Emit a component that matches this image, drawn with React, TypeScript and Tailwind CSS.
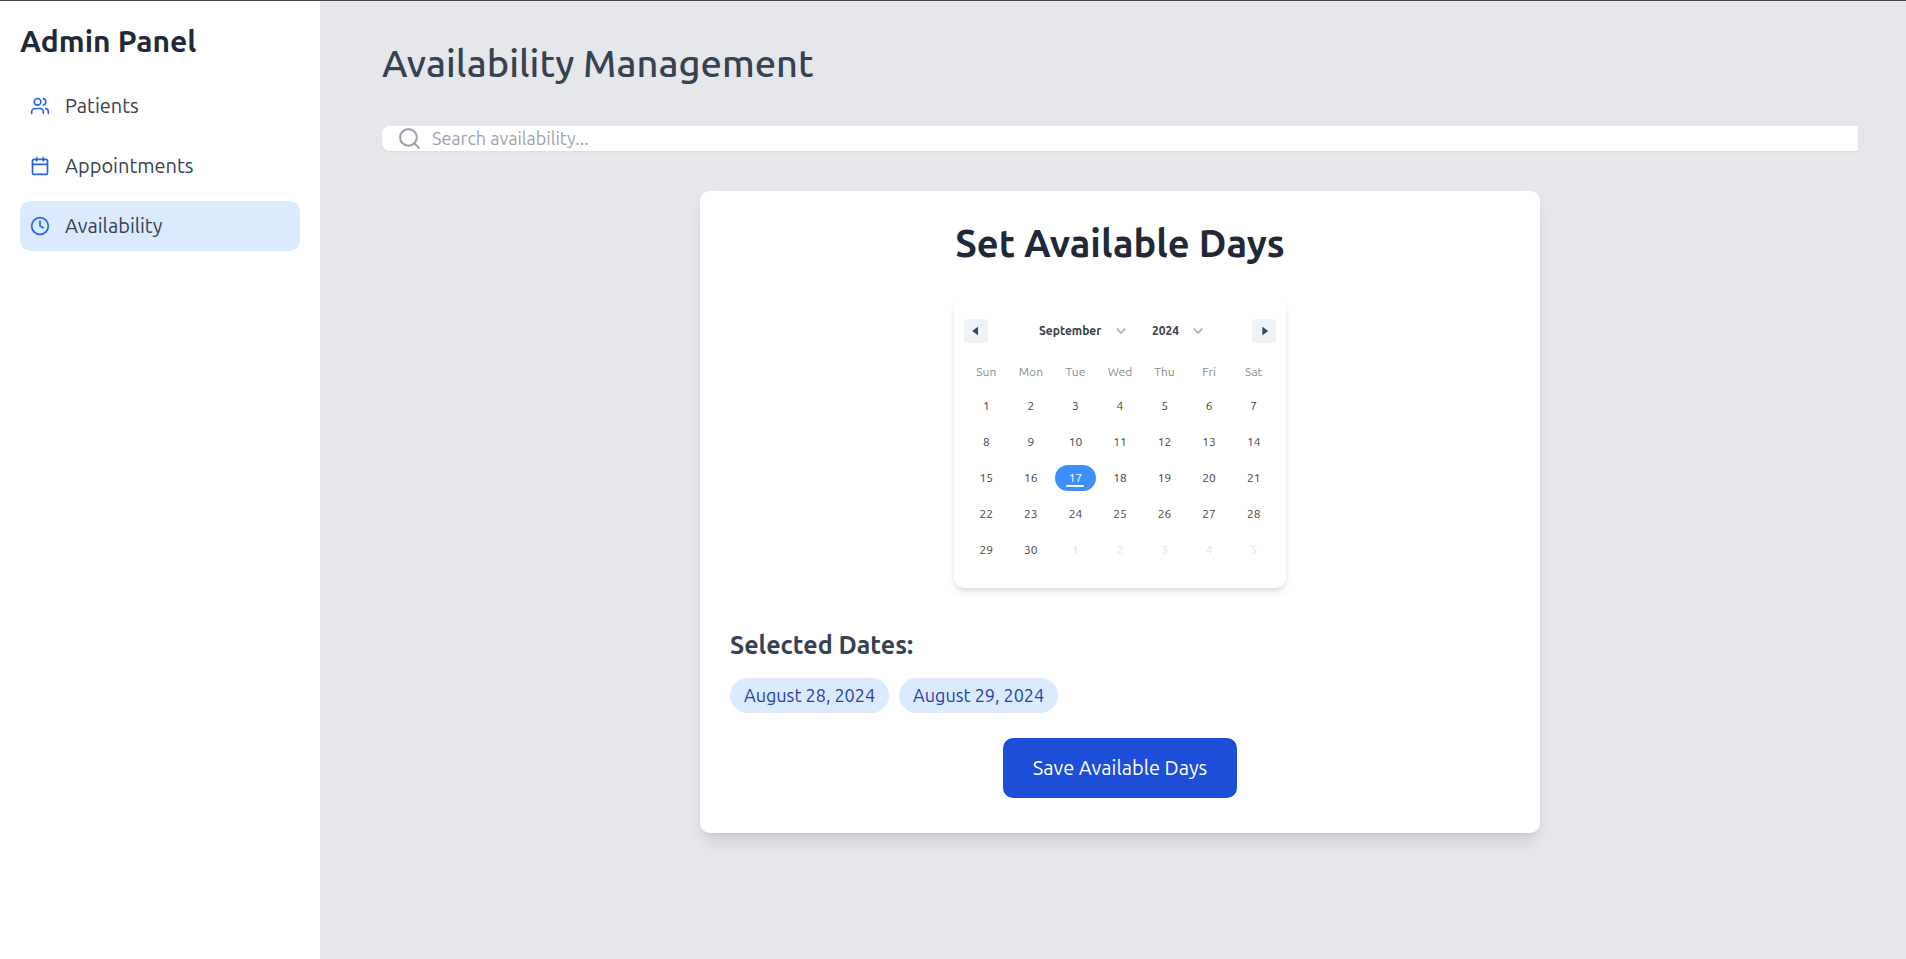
import { useState } from "react";
import { Calendar, Clock, Search, Users, type LucideIcon } from "lucide-react";

const NAV: { label: string; icon: LucideIcon; active?: boolean }[] = [
  { label: "Patients", icon: Users },
  { label: "Appointments", icon: Calendar },
  { label: "Availability", icon: Clock, active: true },
];

const MONTHS = [
  "January", "February", "March", "April", "May", "June",
  "July", "August", "September", "October", "November", "December",
];
const YEARS = [2023, 2024, 2025, 2026];
const WEEKDAYS = ["Sun", "Mon", "Tue", "Wed", "Thu", "Fri", "Sat"];
const SELECTED = ["August 28, 2024", "August 29, 2024"];

type Day = { date: Date; inMonth: boolean };

function buildWeeks(year: number, month: number): Day[][] {
  const offset = new Date(year, month, 1).getDay();
  const total = new Date(year, month + 1, 0).getDate();
  const rows = Math.ceil((offset + total) / 7);
  return Array.from({ length: rows }, (_, r) =>
    Array.from({ length: 7 }, (_, c) => {
      const date = new Date(year, month, r * 7 + c + 1 - offset);
      return { date, inMonth: date.getMonth() === month };
    })
  );
}

function Sidebar() {
  return (
    <aside className="w-80 shrink-0 bg-white p-5">
      <h1 className="mb-5 text-[30px] leading-10 font-bold text-[#1f2937]">Admin Panel</h1>
      <nav>
        <ul className="flex flex-col gap-2.5">
          {NAV.map(({ label, icon: Icon, active }) => (
            <li key={label}>
              <a
                href={`#${label.toLowerCase()}`}
                aria-current={active ? "page" : undefined}
                className={`flex h-[50px] items-center gap-[15px] rounded-[10px] px-2.5 text-xl text-[#374151] ${
                  active ? "bg-[#dbeafe]" : ""
                }`}
              >
                <Icon className="size-5 text-[#2563eb]" strokeWidth={2} />
                {label}
              </a>
            </li>
          ))}
        </ul>
      </nav>
    </aside>
  );
}

function SearchBar() {
  return (
    <div className="mb-10 flex h-[25px] items-center gap-2.5 rounded-l-lg bg-white pl-[15px] shadow-[0_1px_3px_rgba(0,0,0,0.05)]">
      <Search className="size-[25px] shrink-0 text-[#9ca3af]" aria-hidden />
      <input
        type="text"
        aria-label="Search availability"
        placeholder="Search availability..."
        className="h-[25px] min-w-0 flex-1 bg-white text-lg leading-[25px] text-[#374151] outline-none placeholder:text-[#9ca3af]"
      />
    </div>
  );
}

function Chevron() {
  return (
    <svg viewBox="0 0 10 6" className="pointer-events-none absolute top-[9px] right-[7px] h-[6px] w-[10px]" fill="none" stroke="#a6b0b5" strokeWidth="1.7">
      <path d="M0.8 0.6 L5 5 L9.2 0.6" />
    </svg>
  );
}

function NavButton({ label, path, onClick }: { label: string; path: string; onClick: () => void }) {
  return (
    <button type="button" aria-label={label} onClick={onClick} className="flex size-6 items-center justify-center rounded bg-[#eff3f8]">
      <svg viewBox="0 0 12 12" className="size-3" fill="#2f4558">
        <path d={path} />
      </svg>
    </button>
  );
}

function DatePicker() {
  const [view, setView] = useState({ year: 2024, month: 8 });
  const [picked, setPicked] = useState(new Date(2024, 8, 17).getTime());

  const shift = (by: number) => {
    const d = new Date(view.year, view.month + by, 1);
    setView({ year: d.getFullYear(), month: d.getMonth() });
  };

  return (
    <div className="w-[332px] rounded-[10px] bg-white px-2.5 pt-[23px] pb-5 shadow-[0_5px_7px_-1px_rgba(0,0,0,0.1),0_2px_5px_-2px_rgba(0,0,0,0.1)]">
      <div className="flex items-center justify-between">
        <NavButton label="Previous month" path="M8 1.8V10.2L2.2 6Z" onClick={() => shift(-1)} />
        <div className="flex gap-2.5 text-xs font-bold text-[#35414b]">
          <div className="relative w-[103px]">
            <select
              aria-label="Month"
              value={view.month}
              onChange={(e) => setView({ ...view, month: Number(e.target.value) })}
              className="h-6 w-full appearance-none bg-transparent pr-6 pl-[9px] outline-none"
            >
              {MONTHS.map((m, i) => (
                <option key={m} value={i}>{m}</option>
              ))}
            </select>
            <Chevron />
          </div>
          <div className="relative w-[67px]">
            <select
              aria-label="Year"
              value={view.year}
              onChange={(e) => setView({ ...view, year: Number(e.target.value) })}
              className="h-6 w-full appearance-none bg-transparent pr-6 pl-[9px] outline-none"
            >
              {YEARS.map((y) => (
                <option key={y} value={y}>{y}</option>
              ))}
            </select>
            <Chevron />
          </div>
        </div>
        <NavButton label="Next month" path="M4.4 1.8V10.2L10.2 6Z" onClick={() => shift(1)} />
      </div>
      <table className="mt-3 w-full table-fixed border-collapse text-center text-xs">
        <thead>
          <tr className="h-[33px]">
            {WEEKDAYS.map((d) => (
              <th key={d} scope="col" className="p-0 font-normal text-[#828e93]">{d}</th>
            ))}
          </tr>
        </thead>
        <tbody>
          {buildWeeks(view.year, view.month).map((week) => (
            <tr key={week[0].date.getTime()} className="h-9">
              {week.map(({ date, inMonth }) => {
                const isPicked = date.getTime() === picked;
                return (
                  <td key={date.getTime()} className="p-0">
                    <button
                      type="button"
                      aria-pressed={isPicked}
                      onClick={() => setPicked(date.getTime())}
                      className={`relative mx-auto flex h-[26px] w-[41px] items-center justify-center rounded-full ${
                        isPicked ? "bg-[#3c8fff] text-white" : inMonth ? "text-[#444444]" : "text-[#dfe3e6]"
                      }`}
                    >
                      {date.getDate()}
                      {isPicked && <span className="absolute bottom-1 left-1/2 h-0.5 w-[18px] -translate-x-1/2 rounded-full bg-white" />}
                    </button>
                  </td>
                );
              })}
            </tr>
          ))}
        </tbody>
      </table>
    </div>
  );
}

export default function App() {
  return (
    <div className="flex min-h-screen border-t border-[#444444] bg-[#e5e7eb] font-['Ubuntu','Noto_Sans',sans-serif]">
      <Sidebar />
      <main className="min-w-0 flex-1 pt-10 pr-12 pb-10 pl-[62px]">
        <h2 className="mb-10 text-[38px] leading-[45px] font-medium text-[#374151]">Availability Management</h2>
        <SearchBar />
        <section className="mx-auto max-w-[840px] rounded-[10px] bg-white px-[30px] pt-[30px] pb-[35px] shadow-[0_12px_19px_-4px_rgba(0,0,0,0.1),0_5px_8px_-5px_rgba(0,0,0,0.1)]">
          <h2 className="mb-[30px] text-center text-[38px] leading-[45px] font-bold text-[#1f2937]">Set Available Days</h2>
          <div className="flex justify-center">
            <DatePicker />
          </div>
          <h3 className="mt-10 mb-[15px] text-[25px] leading-[35px] font-bold text-[#374151]">Selected Dates:</h3>
          <ul className="flex flex-wrap gap-2.5">
            {SELECTED.map((d) => (
              <li key={d} className="rounded-full bg-[#dbeafe] px-[14px] py-[5px] text-lg leading-[25px] text-[#1e40af]">{d}</li>
            ))}
          </ul>
          <div className="mt-[25px] flex justify-center">
            <button type="button" className="rounded-[10px] bg-[#1d4ed8] px-[30px] py-[15px] text-xl leading-[30px] text-white">
              Save Available Days
            </button>
          </div>
        </section>
      </main>
    </div>
  );
}
